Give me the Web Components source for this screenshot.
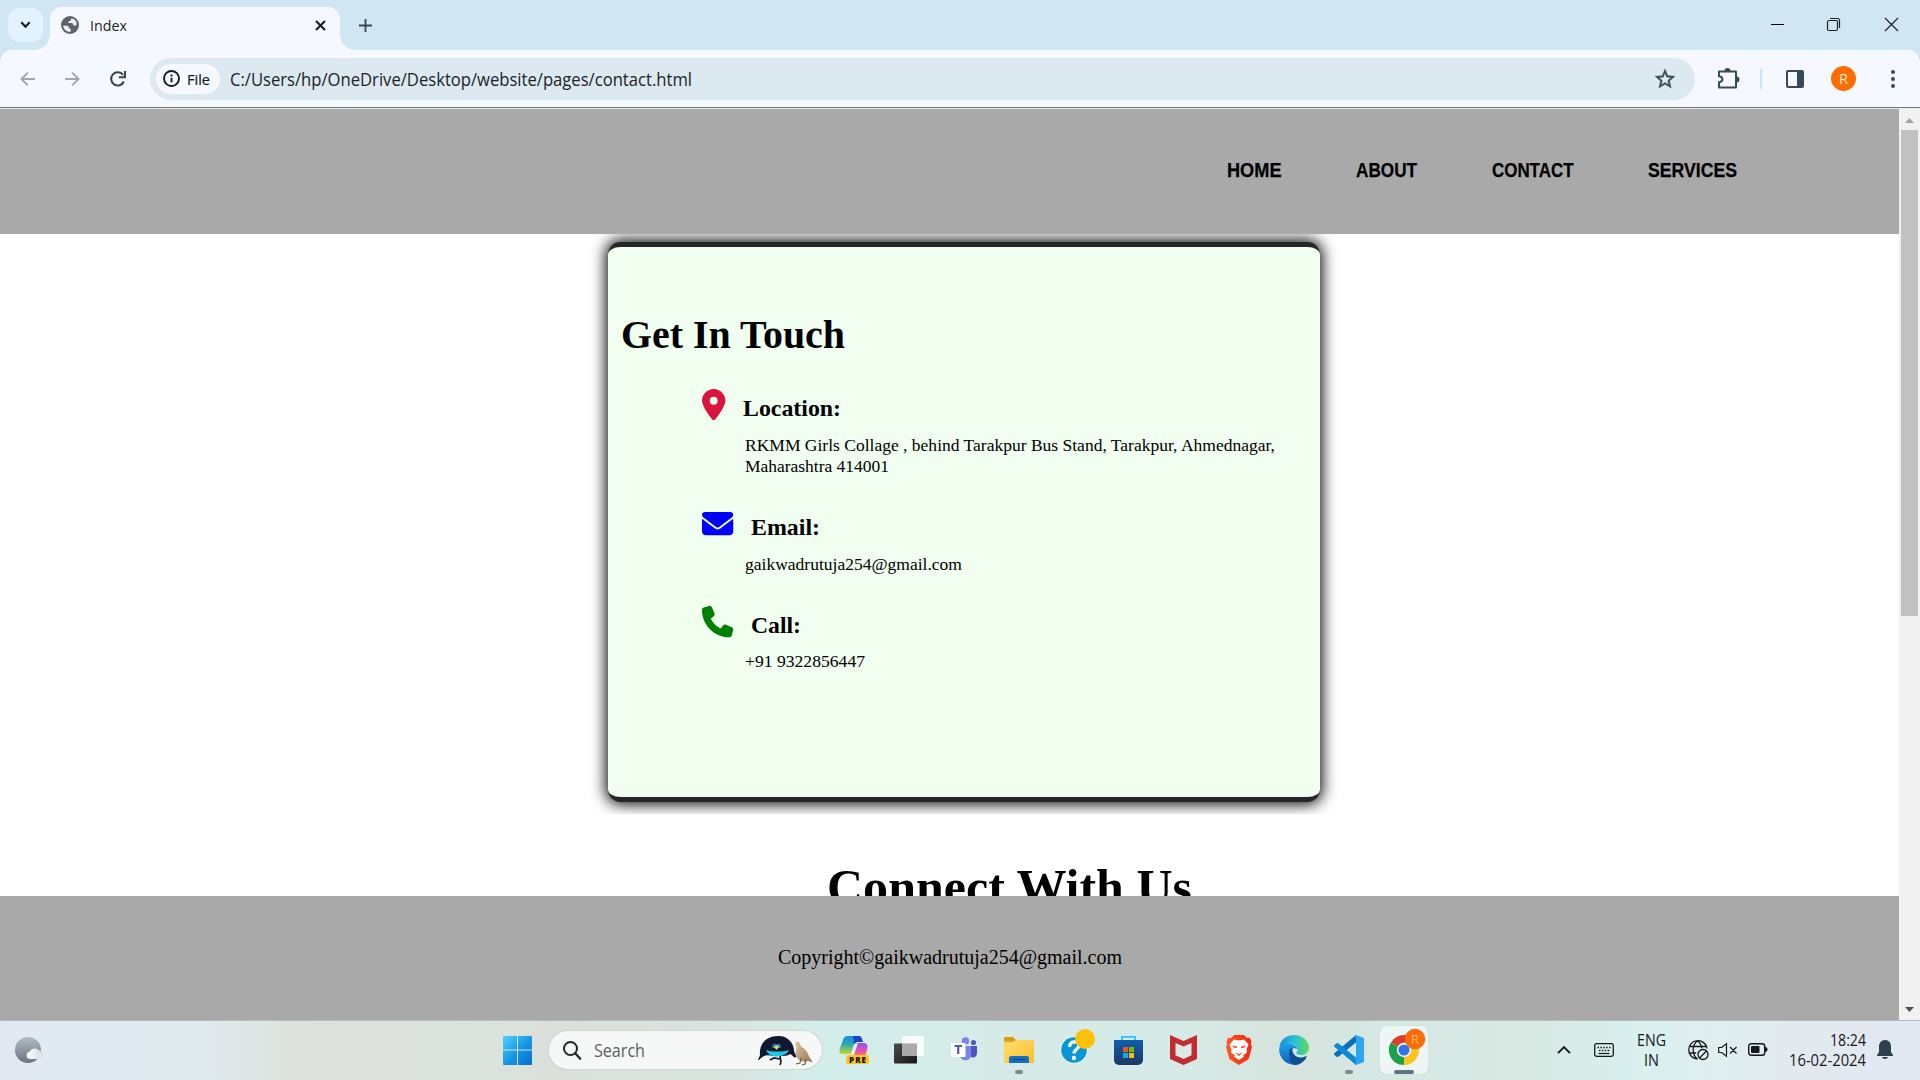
<!DOCTYPE html>
<html lang="en">
<head>
<meta charset="utf-8">
<title>Index</title>
<style>
html,body{margin:0;padding:0}
body{width:1920px;height:1080px;overflow:hidden;font-family:"Open Sans","Noto Sans",sans-serif;background:#fff}
</style>
</head>
<body>
<desktop-screen></desktop-screen>
<script>
const define = (name, css, html) => customElements.define(name, class extends HTMLElement {
  constructor(){
    super();
    const t = document.createElement('template');
    t.innerHTML = `<style>*{box-sizing:border-box}svg{display:block;overflow:visible;flex:none}${css}</style>${html}`;
    this.attachShadow({mode:'open'}).append(t.content.cloneNode(true));
  }
});

define('desktop-screen', `:host{display:flex;flex-direction:column;width:1920px;height:1080px}`,
`<tab-strip></tab-strip><tool-bar></tool-bar><page-view></page-view><task-bar></task-bar>`);

define('tab-strip', `
:host{display:flex;height:50px;background:#d0e6f3;padding-left:8px;align-items:flex-start;flex:none}
.drop{width:35px;height:34px;margin-top:8px;border-radius:12px;background:#e2f3ff;display:grid;place-items:center}
.tab{width:290px;height:43px;margin:7px 0 0 7px;background:#f5f9ff;border-radius:12px 12px 0 0;display:flex;align-items:center;padding:0 14px 7px 11px;position:relative}
.foot{position:absolute;bottom:0;width:15px;height:15px}
.l{left:-15px;background:radial-gradient(circle at 0 0,transparent 14.5px,#f5f9ff 15px)}
.r{right:-15px;background:radial-gradient(circle at 100% 0,transparent 14.5px,#f5f9ff 15px)}
.t{font-size:15px;line-height:20px;color:#1f2124;margin-left:11px;flex:1;padding-bottom:1px}
.win{margin-left:auto;display:flex;gap:43px;padding:18px 22px 0 0}`,
`<div class="drop"><svg width="11" height="8" viewBox="0 0 11 8"><path d="M1.3 1.3l4.2 4.4 4.2-4.4" fill="none" stroke="#101820" stroke-width="2.1"/></svg></div>
<div class="tab"><i class="foot l"></i><i class="foot r"></i>
<svg width="18" height="18" viewBox="0 0 18 18"><circle cx="9" cy="9" r="9" fill="#5f6368"/><path d="M2.2 9.8h3.7c1.6 0 2 1 1.9 2.3 1.5 0 2 .7 1.9 2.3v1.4C5.500 16 2.300 13 2.200 9.800zM10.300 2.400C9.700 3 9.700 4 9.900 4.800 7.900 4.800 7.200 5.600 7.400 7.100h3.100c1.600 0 2 1.300 1.800 2.400l2.900.1c1.500-3.400-.9-7-4.900-7.200z" fill="#eef2f8"/></svg>
<span class="t"><fit-text w="37">Index</fit-text></span>
<svg width="11" height="11" viewBox="0 0 11 11"><path d="M1 1l9 9M10 1l-9 9" stroke="#15191c" stroke-width="2"/></svg></div>
<svg style="margin:18.500px 0 0 19px" width="13" height="13" viewBox="0 0 13 13"><path d="M6.500 0v13M0 6.500h13" stroke="#33474f" stroke-width="1.800"/></svg>
<div class="win">
<svg width="13" height="13"><path d="M0 6.500h13" stroke="#000"/></svg>
<svg style="margin-right:2px" width="13" height="13" fill="none" stroke="#222" stroke-width="1.200"><rect x=".5" y="2.500" width="10" height="10" rx="1.500"/><path d="M3 .5h7.500a2 2 0 012 2V10"/></svg>
<svg width="13" height="13"><path d="M0 0l13 13M13 0L0 13" stroke="#222" stroke-width="1.200"/></svg>
</div>`);

define('tool-bar', `
:host{display:block;height:59px;background:#d0e6f3;flex:none}
.bar{height:59px;background:#f5f9ff;border-radius:12px 12px 0 0;display:flex;align-items:center;padding:0 24px 1px 20px;border-bottom:1px solid #e3e9ec;box-shadow:inset 0 -1px #6f7a82}
.omni{margin-left:24px;width:1545px;height:42px;border-radius:21px;background:#dde9f1;display:flex;align-items:center;padding:0 20px 0 6px;flex:none}
.chip{width:64px;height:30px;border-radius:15px;background:#f5f9ff;display:flex;align-items:center;padding-left:7px;gap:7px;color:#15191c;font-size:15px;line-height:20px;-webkit-text-stroke:.2px}
.url{margin-left:10px;flex:1;font-size:18px;line-height:24px;color:#202427;padding-top:1px}
.av{width:25px;height:25px;border-radius:50%;background:#ff6d00;color:#ffe6d2;font-size:15px;line-height:25px;text-align:center;margin-left:27px}`,
`<div class="bar">
<svg width="15" height="14" fill="none" stroke="#a0a7ad" stroke-width="1.900"><path d="M15 7H1.500M7.800.7L1.500 7l6.300 6.300"/></svg>
<svg style="margin-left:30px" width="15" height="14" fill="none" stroke="#a0a7ad" stroke-width="1.900"><path d="M0 7h13.500M7.200.7L13.500 7l-6.300 6.300"/></svg>
<svg style="margin-left:30px" width="16" height="16" fill="none" stroke="#33474f" stroke-width="2.100"><path d="M13.800 10.500A6.600 6.600 0 1113 3.900"/><path d="M15 0v6.300H8.800" /></svg>
<div class="omni"><div class="chip"><svg width="17" height="17"><circle cx="8.500" cy="8.500" r="7.500" fill="none" stroke="#15191c" stroke-width="1.900"/><path d="M8.500 7.700v4.600M8.500 4.500v1.900" stroke="#15191c" stroke-width="1.900"/></svg><fit-text w="23">File</fit-text></div>
<div class="url"><fit-text w="462">C:/Users/hp/OneDrive/Desktop/website/pages/contact.html</fit-text></div>
<svg width="20" height="20" viewBox="2 2 20 20" fill="#3f4a50" stroke="#3f4a50" stroke-width=".4"><path d="M22 9.240l-7.190-.62L12 2 9.190 8.630 2 9.240l5.460 4.730L5.820 21 12 17.270 18.180 21l-1.630-7.030L22 9.240zM12 15.400l-3.760 2.270 1-4.280-3.320-2.880 4.380-.38L12 6.100l1.710 4.040 4.380.38-3.320 2.880 1 4.280L12 15.400z"/></svg></div>
<svg style="margin-left:23px" width="21" height="21"><path d="M1 3.500h17v16H1v-5.200c4.600-.7 4.600-5.300 0-6z" fill="none" stroke="#364b55" stroke-width="2" stroke-linejoin="round"/><path d="M6.500 3a3 3 0 016 0zM18.500 8.500a3 3 0 010 6z" fill="#364b55"/></svg>
<i style="width:2px;height:20px;background:#bfe7ff;margin-left:21px"></i>
<svg style="margin-left:24px" width="18" height="18"><rect x="1" y="1" width="16" height="16" rx="1" fill="none" stroke="#364b55" stroke-width="2"/><path d="M11 1h6v16h-6z" fill="#364b55"/></svg>
<div class="av"><fit-text w="9">R</fit-text></div>
<svg style="margin-left:auto;margin-right:1.500px" width="4" height="18" fill="#364b55"><circle cx="2" cy="2" r="2"/><circle cx="2" cy="9" r="2"/><circle cx="2" cy="16" r="2"/></svg>
</div>`);

define('page-view', `:host{display:flex;height:911px;flex:none}
.doc{width:1899px;display:flex;flex-direction:column;font-family:"Liberation Serif",serif;color:#000}
main{height:662px;overflow:hidden}
.clip{height:580px;overflow:hidden;padding:8px 0 0 608px}
h1{font-size:50px;line-height:58px;margin:44px 0 0 826.500px}
footer{height:124px;background:#a9a9a9;text-align:center;font-size:20px;line-height:24px;padding-top:49px}`,
`<div class="doc"><site-nav></site-nav><main><div class="clip"><contact-card></contact-card></div><h1><fit-text w="365">Connect With Us</fit-text></h1></main>
<footer><fit-text w="344">Copyright©gaikwadrutuja254@gmail.com</fit-text></footer></div><scroll-bar></scroll-bar>`);

define('site-nav', `:host{display:flex;height:125px;flex:none;background:#a9a9a9;box-sizing:border-box;justify-content:flex-end;padding:49px 162px 0 0;gap:74.700px;font:bold 20px/24px "Liberation Sans",sans-serif;-webkit-text-stroke:.25px}`,
`<fit-text w="54.500">HOME</fit-text><fit-text w="61">ABOUT</fit-text><fit-text w="81.500">CONTACT</fit-text><fit-text w="89">SERVICES</fit-text>`);

define('contact-card', `:host{display:block;box-sizing:border-box;width:712px;height:560px;border-top:5px solid #242628;border-bottom:5px solid #242628;border-radius:12.500px;background:#f0fff0;box-shadow:0 0 15px 2px #000;padding-left:12px}
h1{font-size:40px;line-height:46px;margin:0;padding:65px 0 0 .5px}
.items{padding:31px 0 0 81.700px}`,
`<h1><fit-text w="224">Get In Touch</fit-text></h1>
<div class="items">
<contact-item style="height:122px"><svg slot="icon" width="23.400" height="31.250" viewBox="0 0 384 512" fill="crimson"><path d="M215.700 499.200C267 435 384 279.400 384 192C384 86 298 0 192 0S0 86 0 192c0 87.400 117 243 168.300 307.200c12.300 15.300 35.100 15.300 47.400 0zM192 128a64 64 0 1 1 0 128 64 64 0 1 1 0-128z"/></svg>
<fit-text slot="title" w="98">Location:</fit-text><fit-text w="530">RKMM Girls Collage , behind Tarakpur Bus Stand, Tarakpur, Ahmednagar,</fit-text><fit-text w="144">Maharashtra 414001</fit-text></contact-item>
<contact-item style="height:98px;--title-top:2px;--head:40px"><svg slot="icon" style="margin-top:-3px" width="31.250" height="31.250" viewBox="0 0 512 512" fill="blue"><path d="M48 64C21.500 64 0 85.500 0 112c0 15.100 7.100 29.300 19.200 38.400L236.800 313.600c11.400 8.500 27 8.500 38.400 0L492.800 150.400c12.100-9.100 19.200-23.300 19.200-38.400c0-26.500-21.500-48-48-48H48zM0 176V384c0 35.300 28.700 64 64 64H448c35.300 0 64-28.700 64-64V176L294.400 339.200c-22.800 17.100-54 17.100-76.800 0L0 176z"/></svg>
<fit-text slot="title" w="69">Email:</fit-text><fit-text w="217">gaikwadrutuja254@gmail.com</fit-text></contact-item>
<contact-item style="--title-top:2px;--head:39px"><svg slot="icon" style="margin-top:-3px" width="31.250" height="31.250" viewBox="0 0 512 512" fill="green"><path d="M164.900 24.600c-7.700-18.600-28-28.500-47.400-23.200l-88 24C12.100 30.200 0 46 0 64C0 311.400 200.600 512 448 512c18 0 33.800-12.100 38.600-29.500l24-88c5.300-19.400-4.600-39.700-23.200-47.400l-96-40c-16.300-6.800-35.200-2.100-46.300 11.600L304.700 368C234.300 334.700 177.300 277.700 144 207.300L193.300 167c13.700-11.200 18.400-30 11.600-46.300l-40-96z"/></svg>
<fit-text slot="title" w="50">Call:</fit-text><fit-text w="120">+91 9322856447</fit-text></contact-item>
</div>`);

define('contact-item', `:host{display:block}
.head{display:flex;align-items:flex-start;gap:18px;height:var(--head,43px);font:bold 23.400px/28px "Liberation Serif",serif}
.title{padding-top:var(--title-top,5px)}
.body{display:flex;flex-direction:column;padding-left:43.300px;font-size:17.600px;line-height:21px;margin-top:3px}`,
`<div class="head"><slot name="icon"></slot><div class="title"><slot name="title"></slot></div></div><div class="body"><slot></slot></div>`);

define('scroll-bar', `:host{display:flex;flex-direction:column;width:21px;background:#f1f1f1;align-items:center;box-sizing:border-box;padding:9px 0 8px}
i{width:17px;height:486px;background:#c1c1c1;margin-top:7px}`,
`<svg width="9" height="5"><path d="M0 5L4.500 0 9 5z" fill="#a3a3a3"/></svg><i></i><svg style="margin-top:auto" width="9" height="5"><path d="M0 0l4.500 5L9 0z" fill="#505050"/></svg>`);

define('task-icon', `:host{display:flex;flex-direction:column;align-items:center;width:55px;height:60px;box-sizing:border-box;padding-top:6px;flex:none}
.cell{width:48px;height:48px;border-radius:6px;display:flex;flex-direction:column;align-items:center;padding-top:9px}
:host([active]) .cell{background:#eef6f5;box-shadow:0 0 1px #aebcbb}
.bar{height:4px;border-radius:2px;margin-top:5px}
:host([open]) .bar{width:8px;background:#7f8b89}
:host([active]) .bar{width:20px;background:#5d7484}`,
`<div class="cell"><slot></slot><div class="bar"></div></div>`);

define('task-bar', `:host{display:flex;height:60px;box-sizing:border-box;flex:none;align-items:flex-start;border-top:1px solid #b4bdbc;background:linear-gradient(90deg,#e1e8f2 0,#e1ebef 190px,#dde2de 290px,#dde0da 400px,#d9e3dd 480px,#dbe0d9 560px,#d8e4df 730px,#d3eeeb 820px,#d6ebe7 1000px,#d6ebe7 1180px,#d6e3dd 1290px,#d5e9e5 1400px,#d8e8e2 1520px,#d9f0ee 1640px,#dfeeee 1720px,#e3eaee 1790px,#e2e8f2 1920px)}
task-icon{margin-top:-1px}
.search{width:273px;height:38px;margin:10px 4px 0 17px;border-radius:19px;background:#f5f8f7;box-shadow:0 0 0 1px #cfd6d4,0 1px #bcc4c2;display:flex;align-items:center;padding:0 8px 0 14px;color:#5b5f5f;font-size:18px;line-height:24px}
.search fit-text{margin-left:13px}
.tray{flex:1;display:flex;align-items:center;height:59px;color:#16191b;font-size:16px;line-height:20px;padding:0 0 2px 125.500px}
.lang{width:29px;text-align:center;display:flex;flex-direction:column;align-items:center;margin-left:23px}
.clock{display:flex;flex-direction:column;align-items:flex-end;margin-left:21px}
`,
`<svg style="margin:15px 0 0 15px" width="29" height="28" viewBox="0 0 29 28"><defs><linearGradient id="m" x2="0" y2="1"><stop stop-color="#b0bbc7"/><stop offset="1" stop-color="#6e747d"/></linearGradient><linearGradient id="cl"><stop stop-color="#fff"/><stop offset="1" stop-color="#d5dbe2"/></linearGradient></defs><circle cx="13" cy="14" r="13" fill="url(#m)"/><path d="M15 23a3.700 3.700 0 01-.5-7.300 6 6 0 0110-.9 4.200 4.200 0 01-.5 8.200z" fill="url(#cl)"/></svg>
<svg style="margin:15px 0 0 459px" width="29" height="29" viewBox="0 0 29 29"><defs><linearGradient id="w" x2="1" y2="1"><stop stop-color="#4fd0fb"/><stop offset=".55" stop-color="#1593e3"/><stop offset="1" stop-color="#0470cf"/></linearGradient></defs><path d="M1 0h13v13.500H0V1a1 1 0 011-1zM15 0h13a1 1 0 011 1v12.500H15zM0 14.500h14V29H1a1 1 0 01-1-1zM15 14.500h14V28a1 1 0 01-1 1H15z" fill="url(#w)"/></svg>
<div class="search"><svg width="18" height="19"><circle cx="7.500" cy="7.500" r="6.500" fill="none" stroke="#222728" stroke-width="2"/><path d="M12.200 12.200l5 5.500" stroke="#222728" stroke-width="2.300" stroke-linecap="round"/></svg><fit-text w="51">Search</fit-text>
<svg style="margin-left:auto" width="56" height="31" viewBox="0 0 56 31"><defs><linearGradient id="q" x2="1" y2="1"><stop stop-color="#d9c5a6"/><stop offset="1" stop-color="#9b7450"/></linearGradient></defs><path d="M0 25l2-5C1 8 9 1 20 1s16 8 16 15l2.500 6-2 .5-4-3.500C29 21 26 21 24 21h-9c-4-1-7-1-9 0l-3 2-2 2z" fill="#10182d"/><path d="M8 15c6 2 17 2 23 0-2 4-6 6.500-12 6.500S9.500 19 8 15z" fill="#20c5e8"/><path d="M14 12c1-4 3-4 4.500-2 1.500-2 4-2 4.500 2l-1 1h-7z" fill="#1b86c9"/><path d="M16 12l2.500-2 2.500 2-2.500 3z" fill="#f3dc45"/><path d="M22 21l1 6M23 27l-1 3M12 25l4-2 6 1" fill="none" stroke="#17192b" stroke-width="1.700"/><path d="M37 8l2-1.500c3 0 3 3 4 5 4 2 7 6 8 10l4 6-5-1.500c-5 2-10-.5-12-5-1-4 1-8 0-11z" fill="url(#q)"/><path d="M43 23l-1 5-4 1M48 24l-1 5-3 1" fill="none" stroke="#6d563d" stroke-width="1.100"/></svg></div>

<task-icon><svg width="30" height="30" viewBox="0 0 30 30"><defs><linearGradient id="ca" x2="0" y2="1"><stop stop-color="#1c8be6"/><stop offset=".45" stop-color="#27a8b3"/><stop offset="1" stop-color="#c7d72c"/></linearGradient><linearGradient id="cb" x2="0" y2="1"><stop stop-color="#8a55f2"/><stop offset=".6" stop-color="#ef4fa8"/><stop offset="1" stop-color="#ff8a5c"/></linearGradient></defs><path d="M9 1h10c3 0 3 3 4 6h-5c-2 0-3 2-4 5l-2 7H3c-3 0-3-3-2-6l3-8c1-3 2-4 5-4z" fill="url(#ca)"/><path d="M14 1h6c2.500 0 3 3 4 6h-6l-3 2z" fill="#1645c8"/><path d="M17 8h8c4 0 4 4 3 7l-2 7H12z" fill="url(#cb)"/><path d="M19 8l-4 12h-3l3-9c1-2 2-3 4-3z" fill="#e7ecff"/><rect x="7" y="20" width="23" height="9" rx="2" fill="#fec60c"/><text x="18.500" y="27.500" text-anchor="middle" font-family="Open Sans,sans-serif" font-weight="800" font-size="8" textLength="17" fill="#15110a">PRE</text></svg></task-icon>
<task-icon><svg width="30" height="30" viewBox="0 0 30 30"><defs><linearGradient id="tv" x2="1" y2="1"><stop stop-color="#4b4b4b"/><stop offset="1" stop-color="#171717"/></linearGradient></defs><rect y="8.500" width="23" height="20" rx="1" fill="url(#tv)"/><rect x="8" y="1" width="22" height="20" rx="1" fill="#fff" opacity=".82"/><path d="M8 8.500h15V21H8z" fill="#aaa"/></svg></task-icon>
<task-icon><svg width="28" height="30" viewBox="0 0 28 30"><circle cx="15.500" cy="6" r="3.700" fill="#7b83eb"/><circle cx="23.500" cy="7.500" r="2.600" fill="#5059c9"/><path d="M19 11h8v7c0 6-8 6-8 0z" fill="#4c54c1"/><path d="M10 11h11v9c0 7-11 7-11 0z" fill="#7b83eb"/><rect x="1" y="8" width="14.500" height="14" fill="#fff"/><path d="M4.500 11h7.500M8.200 11v8" stroke="#5159c4" stroke-width="2.200"/></svg></task-icon>
<task-icon open><svg width="30" height="30" viewBox="0 0 30 30"><defs><linearGradient id="fo" x2="1" y2="1"><stop stop-color="#ffdd70"/><stop offset="1" stop-color="#fbc02d"/></linearGradient></defs><path d="M0 3.500A1.500 1.500 0 011.500 2H9l3 3H0z" fill="#dc9a0a"/><path d="M0 5h12v4H0z" fill="#e3a413"/><path d="M0 7h9l3-2h16.500A1.500 1.500 0 0130 6.500V28H0z" fill="url(#fo)"/><path d="M5 28v-5a2 2 0 012-2h16a2 2 0 012 2v5z" fill="#1570c0"/><path d="M8.500 24.500h13" stroke="#0a4a8c" stroke-width="1.200"/></svg></task-icon>
<task-icon><svg width="28" height="30" viewBox="0 0 28 30"><circle cx="14" cy="15" r="14" fill="#e3f4fc"/><circle cx="14" cy="15" r="12.800" fill="#0797d8"/><path d="M9.500 12c.2-6.500 9.500-6.500 9.500-1.500 0 3.500-5 3.500-5 8" fill="none" stroke="#fff" stroke-width="3.200"/><circle cx="14" cy="23" r="2.200" fill="#fff"/><circle cx="25" cy="4" r="10" fill="#fdc109"/></svg></task-icon>
<task-icon><svg width="29" height="30" viewBox="0 0 29 30"><defs><linearGradient id="st" x2="0" y2="1"><stop stop-color="#0f5fae"/><stop offset="1" stop-color="#1d3765"/></linearGradient></defs><path d="M8 6V1.800h13V6" fill="none" stroke="#2dc3f5" stroke-width="1.800"/><path d="M0 5h29v20a5 5 0 01-5 5H5a5 5 0 01-5-5z" fill="url(#st)"/><path d="M9 12h5v5H9z" fill="#f25022"/><path d="M15 12h5v5h-5z" fill="#7fba00"/><path d="M9 18h5v5H9z" fill="#16a9ee"/><path d="M15 18h5v5h-5z" fill="#ffb900"/></svg></task-icon>
<task-icon><svg width="27" height="30" viewBox="0 0 27 30"><path d="M0 0l13.500 6L27 0v24l-13.500 6L0 24z" fill="#c32d31"/><path d="M5.500 8l8 3.600 8-3.600v12.300l-8 3.700-8-3.700z" fill="#dce9e5"/></svg></task-icon>
<task-icon><svg width="26" height="30" viewBox="0 0 26 30"><defs><linearGradient id="br"><stop stop-color="#fb5b22"/><stop offset="1" stop-color="#fa2410"/></linearGradient></defs><path d="M8 0h10l3 3 3-.3L25.500 7l-.8 2 1.300 3-3.300 12-9.700 6-9.700-6L0 12l1.300-3-.8-2L2 2.700 5 3z" fill="url(#br)"/><path d="M8 4.500l3 .8h4l3-.8 4.500 5-2 5 .5 3-4 3 .8 1.200-4.800 3.300-4.800-3.300.8-1.200-4-3 .5-3-2-5z" fill="#fff"/><path d="M6.500 10.500l4.500 1v1.500l-3.500-.5zM19.500 10.500l-4.500 1v1.500l3.500-.5zM9 17.500l4 1.500 4-1.500-4 3.500z" fill="#f9471b"/></svg></task-icon>
<task-icon><svg width="30" height="30" viewBox="0 0 30 30"><defs><linearGradient id="ea"><stop stop-color="#168fdc"/><stop offset=".55" stop-color="#2bc0d5"/><stop offset="1" stop-color="#62dc4a"/></linearGradient><linearGradient id="eb" x2="0" y2="1"><stop stop-color="#1aa3ea"/><stop offset="1" stop-color="#0d60bc"/></linearGradient></defs><path d="M.3 13C1 5 7 0 15 0c9 0 15 6.500 15 12.500 0 5-4 7.500-7.500 7.500-3 0-5.300-1-5.300-2 0-.8 1.300-1.300 1.300-3.500C18.500 10 12 6 6 8.500 3 9.500 1 11.500.3 13z" fill="url(#ea)"/><path d="M.2 14C1 9.500 5 7.500 9.500 8c5.500.3 8.500 3.500 9 6-3-2-8.500-.5-8.500 5 0 5 5 10 10 10A15 15 0 01.2 14z" fill="url(#eb)"/><path d="M10 18c0-3 2-5 3.700-5.500-1.200 3.500.8 10 8.300 10 3 0 4.500-1.300 5.500-1.500 1 .8-3.500 9-12 9C11 28 10 22 10 18z" fill="#104d94"/></svg></task-icon>
<task-icon open><svg width="30" height="30" viewBox="0 0 30 30"><path d="M22 0v7.500L4 22l-1.500-.3L0 19.500v-1z" fill="#0a70b8"/><path d="M22 30v-7.500L4 8 2.500 8.300 0 10.500v1z" fill="#1089d3"/><path d="M22 0l8 3v24l-8 3-1.500-1 1.500-1V3l-1.500-2z" fill="#2aa7f0"/></svg></task-icon>
<task-icon active><svg width="30" height="30" viewBox="0 0 30 30"><path d="M15 15L2 7.500A15 15 0 0128 7.500z" fill="#e33b2e"/><path d="M15 15v15A15 15 0 012 7.500z" fill="#1fa04b"/><path d="M15 15V7.500h13A15 15 0 0115 30z" fill="#fcc41c"/><path d="M2 7.500L8.900 18.500 15 22l-4 7.400A15 15 0 012 7.500z" fill="#1fa04b"/><circle cx="15" cy="15" r="7.200" fill="#fff"/><circle cx="15" cy="15" r="5.600" fill="#3174e8"/><circle cx="26" cy="4" r="10" fill="#ff6d00" stroke="#a6724a" stroke-width=".6"/><text x="26" y="9" text-anchor="middle" font-family="Open Sans,sans-serif" font-size="13.500" fill="#ffb27a">R</text></svg></task-icon>

<div class="tray"><svg width="14" height="8"><path d="M1 7.200l6-6 6 6" fill="none" stroke="#16191b" stroke-width="1.900"/></svg>
<svg style="margin-left:23px" width="20" height="14"><rect x=".7" y=".7" width="18.600" height="12.600" rx="1.800" fill="none" stroke="#16191b" stroke-width="1.300"/><path d="M3.500 4.500h13M5 7.500h11" stroke="#16191b" stroke-width="1.500" stroke-dasharray="1.500 1.400"/><path d="M4.500 10.500h11" stroke="#16191b" stroke-width="1.200"/></svg>
<div class="lang"><fit-text w="29">ENG</fit-text><fit-text w="15">IN</fit-text></div>
<svg style="margin-left:22.500px" width="21" height="20" fill="none" stroke="#16191b" stroke-width="1.300"><path d="M9.500 19A9.200 9.200 0 1119 8.500M9.500.8c-6 5-5.500 14 0 18.200M9.500.8c3 2.500 4 5 4.200 7.500M1.200 6.500h17M1.200 13h7"/><circle cx="15" cy="14.500" r="5"/><path d="M11.500 18l7-7"/></svg>
<svg style="margin-left:9px" width="19" height="14" fill="none" stroke="#16191b" stroke-width="1.200"><path d="M.7 4.500h3L8.500.8v12.400L3.700 9.500h-3zM12 4l6.500 6.500M18.500 4L12 10.500"/></svg>
<svg style="margin-left:11px" width="20" height="13"><rect x=".7" y=".7" width="16" height="11.600" rx="2.500" fill="none" stroke="#16191b" stroke-width="1.400"/><rect x="3" y="3" width="8.500" height="7" rx="1" fill="#16191b"/><path d="M17.500 4.300a2.300 2.300 0 010 4.400z" fill="#16191b" stroke="#16191b"/></svg>
<div class="clock"><fit-text w="36">18:24</fit-text><fit-text w="77">16-02-2024</fit-text></div>
<svg style="margin-left:10.500px" width="16" height="19"><path d="M8 0c4 0 6 3 6 6.500V12l2 3.300v.7H0v-.7L2 12V6.500C2 3 4 0 8 0zM5 17h6c-.5 2.500-5.500 2.500-6 0z" fill="#2d4150"/></svg>
</div>`);

/* Runs one line of text across exactly w pixels. */
customElements.define('fit-text', class extends HTMLElement {
  constructor(){
    super();
    this.attachShadow({mode:'open'}).innerHTML = '<style>:host{display:inline-block;white-space:pre;text-align:left;vertical-align:top}span{display:inline-block;transform-origin:0 0;vertical-align:top}</style><span><slot></slot></span>';
  }
  connectedCallback(){
    const s = this.shadowRoot.querySelector('span'), w = +this.getAttribute('w');
    const n = s.getBoundingClientRect().width;
    if (n) s.style.transform = `scaleX(${w / n})`;
    this.style.width = w + 'px';
  }
});
</script>
</body>
</html>
